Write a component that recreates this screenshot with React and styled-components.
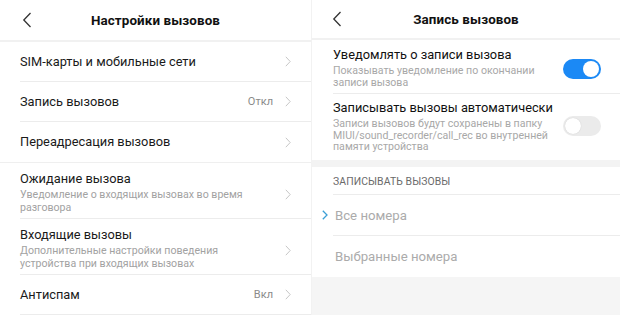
import React from "react";
import styled, { createGlobalStyle } from "styled-components";

const Global = createGlobalStyle`
  html, body { margin: 0; padding: 0; background: #fff; }
  body {
    font-family: Roboto, "Noto Sans", "Liberation Sans", sans-serif;
    -webkit-font-smoothing: antialiased;
  }
  #root { width: 620px; height: 315px; overflow: hidden; }
`;

const Screen = styled.div`
  display: grid;
  grid-template-columns: 311px 309px;
  width: 620px;
  height: 315px;
  overflow: hidden;
`;

const Panel = styled.section`
  display: flex;
  flex-direction: column;
  background: ${(p) => (p.$gray ? "#f5f5f5" : "#fff")};
  ${(p) => (p.$divided ? "border-left: 1px solid #f2f2f2;" : "")}
  overflow: hidden;
`;

const Header = styled.header`
  display: grid;
  grid-template-columns: 1fr auto 1fr;
  align-items: center;
  height: ${(p) => p.$h}px;
  padding: 0 ${(p) => p.$pad}px;
  background: #fff;
  border-bottom: 2px solid #f1f1f1;
  flex-shrink: 0;
`;

const Back = styled.svg`
  width: 10px;
  height: 16px;
  justify-self: start;
`;

const Title = styled.h1`
  margin: 0;
  font-size: 13.4px;
  font-weight: 700;
  color: #111;
  letter-spacing: 0.1px;
`;

const Row = styled.div`
  padding-left: 20px;
  background: #fff;
  flex-shrink: 0;
  ${(p) => (p.$full ? "border-bottom: 1px solid #efefef;" : "")}
`;

const RowInner = styled.div`
  display: flex;
  gap: 12px;
  height: ${(p) => p.$h}px;
  box-sizing: border-box;
  padding-right: 20px;
  padding-top: ${(p) => (p.$top ? p.$top : 0)}px;
  align-items: ${(p) => (p.$top ? "flex-start" : "center")};
  ${(p) => (p.$full ? "" : "border-bottom: 1px solid #ececec;")}
`;

const TextCol = styled.div`
  display: flex;
  flex-direction: column;
  flex: 1;
  min-width: 0;
`;

const RowTitle = styled.div`
  font-size: 12.8px;
  line-height: 16px;
  color: #1a1a1a;
  white-space: nowrap;
`;

const RowSub = styled.div`
  margin-top: 2px;
  font-size: 10.6px;
  line-height: 12.5px;
  color: #a2a2a2;
  max-width: 230px;
`;

const Value = styled.span`
  font-size: 11px;
  color: #8a8a8a;
`;

const ChevronBox = styled.div`
  display: flex;
  align-items: center;
  align-self: center;
  height: 100%;
`;

const Chevron = styled.svg`
  width: 6px;
  height: 11px;
`;

const RPanelRow = styled.div`
  padding-left: 21px;
  background: #fff;
  flex-shrink: 0;
`;

const RInner = styled.div`
  display: flex;
  align-items: flex-start;
  height: ${(p) => p.$h}px;
  box-sizing: border-box;
  padding-top: ${(p) => p.$top}px;
  padding-right: 19px;
  ${(p) => (p.$line ? "border-bottom: 1px solid #ececec;" : "")}
`;

const RTitle = styled.div`
  font-size: 12.8px;
  line-height: 16px;
  color: #111;
  white-space: nowrap;
`;

const RSub = styled.div`
  margin-top: 2px;
  font-size: 10.6px;
  line-height: 11.5px;
  color: #a8a8a8;
  max-width: 220px;
`;

const Toggle = styled.div`
  position: relative;
  width: 38px;
  height: 20px;
  border-radius: 10px;
  flex-shrink: 0;
  align-self: center;
  margin-top: ${(p) => p.$shift || 0}px;
  background: ${(p) => (p.$on ? "#1b89f5" : "#ebebeb")};
`;

const Knob = styled.span`
  position: absolute;
  top: 2px;
  left: ${(p) => (p.$on ? 20 : 2)}px;
  width: 16px;
  height: 16px;
  border-radius: 50%;
  background: #fff;
  box-shadow: ${(p) => (p.$on ? "none" : "0 0 1px rgba(0,0,0,0.2)")};
`;

const Band = styled.div`
  height: 7px;
  background: #f3f3f3;
  flex-shrink: 0;
`;

const SectionLabel = styled.div`
  display: flex;
  align-items: center;
  height: 28px;
  box-sizing: border-box;
  padding-top: 1px;
  border-bottom: 1px solid #ececec;
  font-size: 10.4px;
  color: #6a6a6a;
  letter-spacing: 0.1px;
`;

const Option = styled.div`
  position: relative;
  display: flex;
  align-items: center;
  height: ${(p) => p.$h}px;
  box-sizing: border-box;
  padding-left: 2px;
  ${(p) => (p.$line ? "border-bottom: 1px solid #ececec;" : "")}
  font-size: 13.2px;
  color: #ababab;
`;

const Marker = styled.svg`
  position: absolute;
  left: -11px;
  top: 50%;
  margin-top: -5px;
  width: 6px;
  height: 10px;
`;

const BackIcon = () => (
  <Back viewBox="0 0 10 16">
    <path d="M8.5 1 L1.8 8 L8.5 15" fill="none" stroke="#333" strokeWidth="1.3" />
  </Back>
);

const Arrow = () => (
  <ChevronBox>
    <Chevron viewBox="0 0 6 11">
      <path d="M0.8 0.8 L5.2 5.5 L0.8 10.2" fill="none" stroke="#c6c6c6" strokeWidth="1" />
    </Chevron>
  </ChevronBox>
);

const SimpleRow = ({ title, value, full }) => (
  <Row $full={full}>
    <RowInner $h={40} $full={full}>
      <TextCol>
        <RowTitle>{title}</RowTitle>
      </TextCol>
      {value && <Value>{value}</Value>}
      <Arrow />
    </RowInner>
  </Row>
);

const DetailRow = ({ title, sub, h }) => (
  <Row>
    <RowInner $h={h} $top={8}>
      <TextCol>
        <RowTitle>{title}</RowTitle>
        <RowSub>{sub}</RowSub>
      </TextCol>
      <Arrow />
    </RowInner>
  </Row>
);

export default function App() {
  return (
    <>
      <Global />
      <Screen>
        <Panel>
          <Header $h={40} $pad={22}>
            <BackIcon />
            <Title>Настройки вызовов</Title>
            <span />
          </Header>
          <SimpleRow title="SIM-карты и мобильные сети" />
          <SimpleRow title="Запись вызовов" value="Откл" />
          <SimpleRow title="Переадресация вызовов" full />
          <DetailRow
            h={56}
            title="Ожидание вызова"
            sub="Уведомление о входящих вызовах во время разговора"
          />
          <DetailRow
            h={56}
            title="Входящие вызовы"
            sub="Дополнительные настройки поведения устройства при входящих вызовах"
          />
          <SimpleRow title="Антиспам" value="Вкл" />
        </Panel>

        <Panel $gray $divided>
          <Header $h={38} $pad={20}>
            <BackIcon />
            <Title>Запись вызовов</Title>
            <span />
          </Header>
          <RPanelRow>
            <RInner $h={54} $top={7} $line>
              <TextCol>
                <RTitle>Уведомлять о записи вызова</RTitle>
                <RSub>Показывать уведомление по окончании записи вызова</RSub>
              </TextCol>
              <Toggle $on $shift={-2}>
                <Knob $on />
              </Toggle>
            </RInner>
          </RPanelRow>
          <RPanelRow>
            <RInner $h={66} $top={6}>
              <TextCol>
                <RTitle>Записывать вызовы автоматически</RTitle>
                <RSub>
                  Записи вызовов будут сохранены в папку
                  MIUI/sound_recorder/call_rec во внутренней памяти устройства
                </RSub>
              </TextCol>
              <Toggle $shift={-8}>
                <Knob />
              </Toggle>
            </RInner>
          </RPanelRow>
          <Band />
          <RPanelRow>
            <SectionLabel>ЗАПИСЫВАТЬ ВЫЗОВЫ</SectionLabel>
            <Option $h={41} $line>
              <Marker viewBox="0 0 6 10">
                <path d="M0.8 0.8 L5 5 L0.8 9.2" fill="none" stroke="#3c9fd6" strokeWidth="1.3" />
              </Marker>
              Все номера
            </Option>
            <Option $h={41}>Выбранные номера</Option>
          </RPanelRow>
        </Panel>
      </Screen>
    </>
  );
}
